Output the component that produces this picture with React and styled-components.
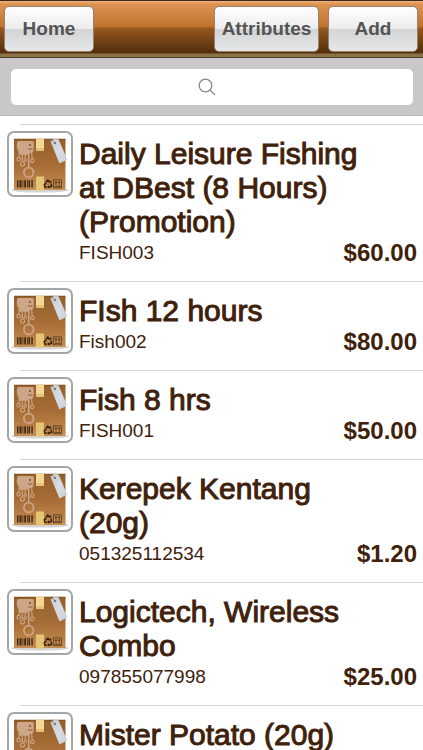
import styled, { createGlobalStyle } from "styled-components";

const products = [
  { sku: "FISH003", title: "Daily Leisure Fishing at DBest (8 Hours) (Promotion)", price: "60.00" },
  { sku: "Fish002", title: "FIsh 12 hours", price: "80.00" },
  { sku: "FISH001", title: "Fish 8 hrs", price: "50.00" },
  { sku: "051325112534", title: "Kerepek Kentang (20g)", price: "1.20" },
  { sku: "097855077998", title: "Logictech, Wireless Combo", price: "25.00" },
  { sku: "", title: "Mister Potato (20g)", price: "" },
];

// x position and width of every bar in the barcode
const bars = [[10, 1.5], [12.5, 2], [15.5, 0.8], [17.2, 1.8], [20, 0.8], [21.5, 1.5], [24.3, 1.5]];

function BoxPicture() {
  return (
    <svg viewBox="0 0 66 66" width="66" height="66" aria-hidden="true">
      <defs>
        <linearGradient id="card" x1="0" y1="0" x2="0" y2="1">
          <stop offset="0" stopColor="#94602c" />
          <stop offset="0.5" stopColor="#a66c35" />
          <stop offset="1" stopColor="#c48d52" />
        </linearGradient>
        <linearGradient id="tag" x1="0" y1="0" x2="1" y2="1">
          <stop offset="0" stopColor="#c3c9cf" />
          <stop offset="0.5" stopColor="#d8dde3" />
          <stop offset="1" stopColor="#c9cfd6" />
        </linearGradient>
      </defs>
      <rect x="1" y="1" width="64" height="64" rx="6" fill="#fff" stroke="#a3a5a8" strokeWidth="2" />
      <ellipse cx="33" cy="59.2" rx="29" ry="2.4" fill="#d5d5d5" />
      <rect x="7" y="8" width="51.5" height="51" fill="url(#card)" />
      <path d="M7 8.2h51.5" stroke="#7d4b1d" strokeWidth="0.8" />
      <rect x="29" y="7.5" width="8" height="12.5" fill="#f3d795" />
      <rect x="29" y="17" width="8" height="3" fill="#e6c278" />
      <rect x="29" y="45.5" width="8" height="14" fill="#e5c574" />

      {/* octopus */}
      <path
        d="M10 12q0-2 2-2h14l.8 1.5v6.500q0 3-2.300 4h-2l-1.500 1.800h-8.500q-1.500-1-.8-3.300-2.500-3-1.700-8.500z"
        fill="#cda688"
      />
      <circle cx="23" cy="14" r="0.9" fill="#70431e" />
      <path d="M21 17.5q1.500 1.500 4.500.3" fill="none" stroke="#8b5a30" strokeWidth="1" />
      <g fill="none" stroke="#cda688" strokeWidth="1.1">
        <path d="M12.500 22l-.8 4.500M15.300 23v8M18.200 23v4.500M24.500 21l.8 7" />
        <path d="M21.700 22v14.500" strokeWidth="1.5" />
        <circle cx="11.7" cy="28.2" r="1.8" />
        <circle cx="15.5" cy="33" r="2" />
        <circle cx="18.2" cy="29" r="1.3" />
        <circle cx="25.3" cy="29.8" r="1.8" />
        <circle cx="21.7" cy="41.5" r="4.8" strokeWidth="1.7" />
      </g>

      <path d="M43.500 10.500l3-2.500 5 .2 8.700 20.300-7.700 4z" fill="url(#tag)" />
      <circle cx="48" cy="12" r="1" fill="#5a5f64" />
      <path d="M47.500 11.500q-2.500-1-2-4" fill="none" stroke="#6d6257" strokeWidth="0.6" />

      {bars.map(([x, width]) => (
        <rect key={x} x={x} y="49.3" width={width} height="7.2" fill="#432b17" />
      ))}

      {/* recycling and this-way-up marks */}
      <g fill="none" stroke="#38220f" strokeWidth="1.5">
        <path d="M38.800 51.500l2-2.300 2 2.300M44 52.500l.6 2.700-2.500 1h-1M39.700 56.200h-1.700l-.8-2.200 1.300-1.500" />
      </g>
      <path d="M42 50l2.500-.4-.5 2.700zM42 54.200v3.300l-2-1.500zM37 52.500l2.200-1 .5 2z" fill="#38220f" />
      <g fill="none" stroke="#4b3019" strokeWidth="0.7">
        <rect x="46.6" y="48.9" width="8" height="7.9" />
        <path d="M47.500 55.500h6.200M49 54.800v-4M52.200 54.800v-4" />
      </g>
      <path d="M47.800 51.800l1.200-1.800 1.200 1.800zM51 51.800l1.200-1.800 1.200 1.800z" fill="#38220f" />
    </svg>
  );
}

function ProductRow(props) {
  const { product } = props;

  return (
    <Row>
      <RowContent>
        <Thumb><BoxPicture /></Thumb>
        <Details>
          <ProductTitle>{product.title}</ProductTitle>
          <ProductMeta>
            <Sku>{product.sku}</Sku>
            {product.price && <Price>${product.price}</Price>}
          </ProductMeta>
        </Details>
      </RowContent>
    </Row>
  );
}

function App() {
  return (
    <Page>
      <GlobalStyle />
      <Toolbar>
        <ToolbarButton $width="90px">Home</ToolbarButton>
        <ToolbarGroup>
          <ToolbarButton $width="105px">Attributes</ToolbarButton>
          <ToolbarButton $width="90px">Add</ToolbarButton>
        </ToolbarGroup>
      </Toolbar>
      <SearchBar>
        <SearchInput type="search" aria-label="Search products" />
        <SearchIcon viewBox="0 0 18 18" aria-hidden="true">
          <circle cx="7.5" cy="7.5" r="6.3" />
          <path d="M12 12l5 5" />
        </SearchIcon>
      </SearchBar>
      <ProductList>
        {products.map((product) => (
          <ProductRow key={product.title} product={product} />
        ))}
      </ProductList>
    </Page>
  );
}

export default App;

const GlobalStyle = createGlobalStyle`
  * {
    box-sizing: border-box;
  }

  body {
    margin: 0;
    background: #fff;
    font-family: "Liberation Sans", Arial, sans-serif;
  }
`

const Page = styled.main`
  display: flex;
  flex-direction: column;
  height: 100vh;
  overflow: hidden;
  color: #40210b;
`

const Toolbar = styled.header`
  display: flex;
  flex-shrink: 0;
  justify-content: space-between;
  padding: 5px 5px 5px 4px;
  border-top: 1px solid #3c2926;
  border-bottom: 1px solid #494034;
  background: linear-gradient(#f4b275 0, #dd9453 3px, #bd732e 26px, #97581f 27px, #57300e 50px, #57300e 52px, #8a7146 53px, #8a7146 100%);
`

const ToolbarGroup = styled.div`
  display: flex;
  gap: 9px;
`

const ToolbarButton = styled.button`
  width: ${(props) => props.$width};
  height: 46px;
  padding: 0;
  border: 1px solid #99816b;
  border-radius: 5px;
  background: linear-gradient(#fff, #ececed 50%, #d2d4d6 51%, #e6e7e8);
  color: #545454;
  font-family: inherit;
  font-size: 19px;
  font-weight: 700;
  cursor: pointer;
`

const SearchBar = styled.div`
  position: relative;
  flex-shrink: 0;
  padding: 11px 10px 10px 11px;
  border-bottom: 1px solid #b9b7b9;
  background: #c9c7c8;
`

const SearchInput = styled.input`
  display: block;
  width: 100%;
  height: 36px;
  padding: 0 12px;
  border: 0;
  border-radius: 5px;
  background: #fff;
  color: #40210b;
  font-family: inherit;
  font-size: 18px;
`

const SearchIcon = styled.svg`
  position: absolute;
  top: 20px;
  left: calc(50% - 14px);
  width: 18px;
  height: 18px;
  fill: none;
  stroke: #88888a;
  stroke-width: 1.3;
  pointer-events: none;
`

const ProductList = styled.ul`
  flex: 1;
  min-height: 0;
  margin: 0;
  padding: 8px 0 0;
  overflow: hidden;
  list-style: none;
`

const Row = styled.li`
  &::before {
    content: "";
    display: block;
    height: 1px;
    margin-left: 20px;
    background: #d3d3d5;
  }
`

const RowContent = styled.div`
  display: flex;
  gap: 6px;
  padding: 0 6px 0 7px;
`

const Thumb = styled.div`
  flex-shrink: 0;
  padding-top: 6px;
  line-height: 0;
`

const Details = styled.div`
  flex: 1;
  padding: 12px 0 14px;
`

const ProductTitle = styled.h2`
  margin: 0;
  padding-right: 48px;
  font-size: 30px;
  font-weight: 400;
  line-height: 34px;
  -webkit-text-stroke: 1px currentColor;
`

const ProductMeta = styled.div`
  display: flex;
  align-items: center;
  justify-content: space-between;
  height: 28px;
`

const Sku = styled.span`
  font-size: 19px;
`

const Price = styled.span`
  font-size: 24px;
  font-weight: 700;
`
